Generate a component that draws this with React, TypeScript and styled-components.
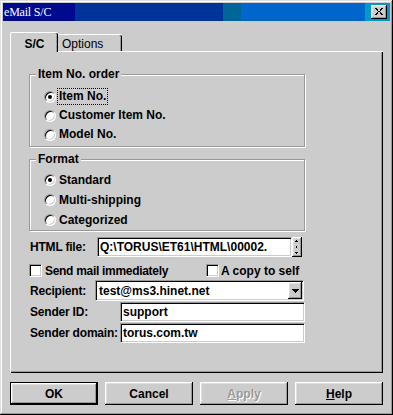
import React from "react";
import styled, { createGlobalStyle } from "styled-components";

const Global = createGlobalStyle`
  html, body { margin: 0; padding: 0; background: #cccccc; }
  body { font-family: "Liberation Sans", Arial, sans-serif; font-size: 12px; color: #000; }
  * { box-sizing: border-box; }
`;

const raised = `
  box-shadow: inset -1px -1px 0 #000, inset 1px 1px 0 #fff, inset -2px -2px 0 #999, inset 2px 2px 0 #dfdfdf;
`;

const Window = styled.div`
  width: 393px;
  height: 415px;
  background: #cccccc;
  padding: 3px;
  display: flex;
  flex-direction: column;
  box-shadow: inset -1px -1px 0 #000, inset 1px 1px 0 #dfdfdf, inset -2px -2px 0 #999, inset 2px 2px 0 #fff;
`;

const TitleBar = styled.div`
  height: 18px;
  flex: none;
  display: flex;
  align-items: center;
  justify-content: space-between;
  padding: 0 3px 0 1px;
  background: linear-gradient(
    to right,
    #000a8f 0 72px,
    #003399 72px 220px,
    #006699 220px 238px,
    #0066cc 238px 362px,
    #0099cc 362px
  );
`;

const Title = styled.span`
  color: #fff;
  font-family: "Liberation Serif", "Times New Roman", serif;
  font-size: 12px;
  letter-spacing: -0.2px;
  line-height: 14px;
`;

const CloseButton = styled.div`
  width: 16px;
  height: 14px;
  background: #cccccc;
  ${raised}
  display: flex;
  align-items: center;
  justify-content: center;
  padding-bottom: 1px;
`;

const Body = styled.div`
  flex: 1;
  display: flex;
  flex-direction: column;
  padding: 11px 7px 7px;
`;

const TabStrip = styled.div`
  height: 19px;
  display: flex;
  align-items: flex-end;
  position: relative;
  z-index: 1;
`;

const Tab = styled.div<{ $active?: boolean; $w: number }>`
  width: ${(p) => p.$w}px;
  height: ${(p) => (p.$active ? 20 : 17)}px;
  margin-bottom: ${(p) => (p.$active ? -1 : 0)}px;
  background: #cccccc;
  border-top: 1px solid #fff;
  border-left: ${(p) => (p.$active ? "1px solid #fff" : "none")};
  border-top-left-radius: 2px;
  border-top-right-radius: 2px;
  box-shadow: inset -1px 0 0 #000, inset -2px 0 0 #999;
  font-weight: ${(p) => (p.$active ? 700 : 400)};
  display: flex;
  align-items: center;
  justify-content: ${(p) => (p.$active ? "center" : "flex-start")};
  padding: ${(p) => (p.$active ? "2px 0 0 0" : "1px 0 0 4px")};
  line-height: 14px;
`;

const Panel = styled.div`
  height: 322px;
  flex: none;
  background: #cccccc;
  border-top: 1px solid #fff;
  border-left: 1px solid #fff;
  box-shadow: inset -1px -1px 0 #000, inset -2px -2px 0 #999;
  padding: 22px 0 0 18px;
  display: flex;
  flex-direction: column;
`;

const Group = styled.div<{ $h: number; $pt: number; $mt?: number }>`
  position: relative;
  width: 276px;
  height: ${(p) => p.$h}px;
  margin-top: ${(p) => p.$mt ?? 0}px;
  border: 1px solid #999;
  box-shadow: 1px 1px 0 #fff, inset 1px 1px 0 #fff;
  padding: ${(p) => p.$pt}px 0 0 14px;
  display: flex;
  flex-direction: column;
`;

const Legend = styled.div`
  position: absolute;
  left: 6px;
  top: -8px;
  padding: 0 2px;
  background: #cccccc;
  font-weight: 700;
  line-height: 14px;
`;

const RadioRow = styled.div<{ $h: number }>`
  height: ${(p) => p.$h}px;
  display: flex;
  align-items: center;
`;

const Radio = styled.span<{ $checked?: boolean }>`
  position: relative;
  flex: none;
  width: 12px;
  height: 12px;
  border-radius: 50%;
  background: #fff;
  border: 1px solid;
  border-color: #999 #fff #fff #999;
  box-shadow: inset 1px 1px 0 #000, inset -1px -1px 0 #cccccc;
  &::after {
    content: "";
    display: ${(p) => (p.$checked ? "block" : "none")};
    position: absolute;
    left: 3px;
    top: 3px;
    width: 4px;
    height: 4px;
    border-radius: 50%;
    background: #000;
  }
`;

const RadioLabel = styled.span<{ $focus?: boolean }>`
  margin-left: 1px;
  padding: 0 1px;
  line-height: 15px;
  font-weight: 700;
  white-space: nowrap;
  border: 1px ${(p) => (p.$focus ? "dotted #000" : "solid transparent")};
`;

const FieldRow = styled.div<{ $h: number; $mt: number }>`
  display: flex;
  align-items: center;
  height: ${(p) => p.$h}px;
  margin-top: ${(p) => p.$mt}px;
`;

const FieldLabel = styled.div<{ $w: number }>`
  width: ${(p) => p.$w}px;
  flex: none;
  padding-left: 1px;
  font-weight: 700;
  letter-spacing: -0.2px;
  white-space: nowrap;
`;

const Sunken = styled.div<{ $w: number }>`
  width: ${(p) => p.$w}px;
  height: 100%;
  flex: none;
  background: #fff;
  border: 1px solid;
  border-color: #999 #fff #fff #999;
  box-shadow: inset 1px 1px 0 #000, inset -1px -1px 0 #cccccc;
  padding: 0 2px;
  display: flex;
  align-items: center;
  font-weight: 700;
  white-space: nowrap;
  overflow: hidden;
`;

const Combo = styled(Sunken)`
  padding: 1px 1px 1px 3px;
  justify-content: space-between;
`;

const DropButton = styled.div`
  width: 14px;
  height: 100%;
  flex: none;
  background: #cccccc;
  ${raised}
  display: flex;
  align-items: center;
  justify-content: center;
`;

const SpinButton = styled.div`
  width: 10px;
  height: 100%;
  flex: none;
  background: #cccccc;
  ${raised}
  display: flex;
  align-items: center;
  justify-content: center;
`;

const CheckItem = styled.div<{ $w?: number }>`
  display: flex;
  align-items: center;
  width: ${(p) => (p.$w ? `${p.$w}px` : "auto")};
  flex: none;
`;

const CheckBox = styled.span`
  width: 13px;
  height: 13px;
  flex: none;
  background: #fff;
  border: 1px solid;
  border-color: #999 #fff #fff #999;
  box-shadow: inset 1px 1px 0 #000, inset -1px -1px 0 #cccccc;
`;

const CheckText = styled.span<{ $gap: number; $ls?: number }>`
  margin-left: ${(p) => p.$gap}px;
  letter-spacing: ${(p) => p.$ls ?? 0}px;
  font-weight: 700;
  white-space: nowrap;
`;

const ButtonRow = styled.div`
  display: grid;
  grid-template-columns: repeat(4, 1fr);
  column-gap: 7px;
  height: 23px;
  margin-top: 9px;
  flex: none;
`;

const Btn = styled.div<{ $default?: boolean; $disabled?: boolean }>`
  display: flex;
  align-items: center;
  justify-content: center;
  font-weight: 700;
  background: #cccccc;
  border: ${(p) => (p.$default ? "1px solid #000" : "none")};
  ${raised}
  color: ${(p) => (p.$disabled ? "#999" : "#000")};
  text-shadow: ${(p) => (p.$disabled ? "1px 1px 0 #fff" : "none")};
  padding-top: 1px;
`;

const CloseIcon = () => (
  <svg width="8" height="7" viewBox="0 0 8 7" shapeRendering="crispEdges">
    <path d="M0 0h2v1h-2zM1 1h2v1h-2zM2 2h1v1h-1zM3 3h2v1h-2zM2 4h1v1h-1zM1 5h2v1h-2zM0 6h2v1h-2z" fill="#000" />
    <path d="M6 0h2v1h-2zM5 1h2v1h-2zM5 2h1v1h-1zM5 4h1v1h-1zM5 5h2v1h-2zM6 6h2v1h-2z" fill="#000" />
  </svg>
);

const DownArrow = () => (
  <svg width="7" height="4" viewBox="0 0 7 4" shapeRendering="crispEdges">
    <path d="M0 0h7v1h-7zM1 1h5v1h-5zM2 2h3v1h-3zM3 3h1v1h-1z" fill="#000" />
  </svg>
);

const SpinArrows = () => (
  <svg width="4" height="14" viewBox="0 0 4 14" shapeRendering="crispEdges">
    <path d="M1 0h1v1h-1zM0 1h3v1h-3z" fill="#000" />
    <path d="M1 6h1v2h-1z" fill="#000" />
    <path d="M0 12h3v1h-3zM1 13h1v1h-1z" fill="#000" />
  </svg>
);

export default function App() {
  return (
    <>
      <Global />
      <Window>
        <TitleBar>
          <Title>eMail S/C</Title>
          <CloseButton>
            <CloseIcon />
          </CloseButton>
        </TitleBar>
        <Body>
          <TabStrip>
            <Tab $active $w={48}>S/C</Tab>
            <Tab $w={64}>Options</Tab>
          </TabStrip>
          <Panel>
            <Group $h={73} $pt={12}>
              <Legend>Item No. order</Legend>
              <RadioRow $h={19}>
                <Radio $checked />
                <RadioLabel $focus>Item No.</RadioLabel>
              </RadioRow>
              <RadioRow $h={19}>
                <Radio />
                <RadioLabel>Customer Item No.</RadioLabel>
              </RadioRow>
              <RadioRow $h={19}>
                <Radio />
                <RadioLabel>Model No.</RadioLabel>
              </RadioRow>
            </Group>
            <Group $h={72} $pt={10} $mt={12}>
              <Legend>Format</Legend>
              <RadioRow $h={20}>
                <Radio $checked />
                <RadioLabel>Standard</RadioLabel>
              </RadioRow>
              <RadioRow $h={20}>
                <Radio />
                <RadioLabel>Multi-shipping</RadioLabel>
              </RadioRow>
              <RadioRow $h={20}>
                <Radio />
                <RadioLabel>Categorized</RadioLabel>
              </RadioRow>
            </Group>
            <FieldRow $h={20} $mt={6}>
              <FieldLabel $w={68}>HTML file:</FieldLabel>
              <Sunken $w={195}>Q:\TORUS\ET61\HTML\00002.</Sunken>
              <SpinButton>
                <SpinArrows />
              </SpinButton>
            </FieldRow>
            <FieldRow $h={17} $mt={5}>
              <CheckItem $w={177}>
                <CheckBox />
                <CheckText $gap={3} $ls={-0.3}>Send mail immediately</CheckText>
              </CheckItem>
              <CheckItem>
                <CheckBox />
                <CheckText $gap={2}>A copy to self</CheckText>
              </CheckItem>
            </FieldRow>
            <FieldRow $h={21} $mt={1}>
              <FieldLabel $w={66}>Recipient:</FieldLabel>
              <Combo $w={209}>
                <span>test@ms3.hinet.net</span>
                <DropButton>
                  <DownArrow />
                </DropButton>
              </Combo>
            </FieldRow>
            <FieldRow $h={20} $mt={1}>
              <FieldLabel $w={91}>Sender ID:</FieldLabel>
              <Sunken $w={185}>support</Sunken>
            </FieldRow>
            <FieldRow $h={20} $mt={1}>
              <FieldLabel $w={91}>Sender domain:</FieldLabel>
              <Sunken $w={185}>torus.com.tw</Sunken>
            </FieldRow>
          </Panel>
          <ButtonRow>
            <Btn $default>OK</Btn>
            <Btn>Cancel</Btn>
            <Btn $disabled>
              <span>
                <u>A</u>pply
              </span>
            </Btn>
            <Btn>
              <span>
                <u>H</u>elp
              </span>
            </Btn>
          </ButtonRow>
        </Body>
      </Window>
    </>
  );
}
